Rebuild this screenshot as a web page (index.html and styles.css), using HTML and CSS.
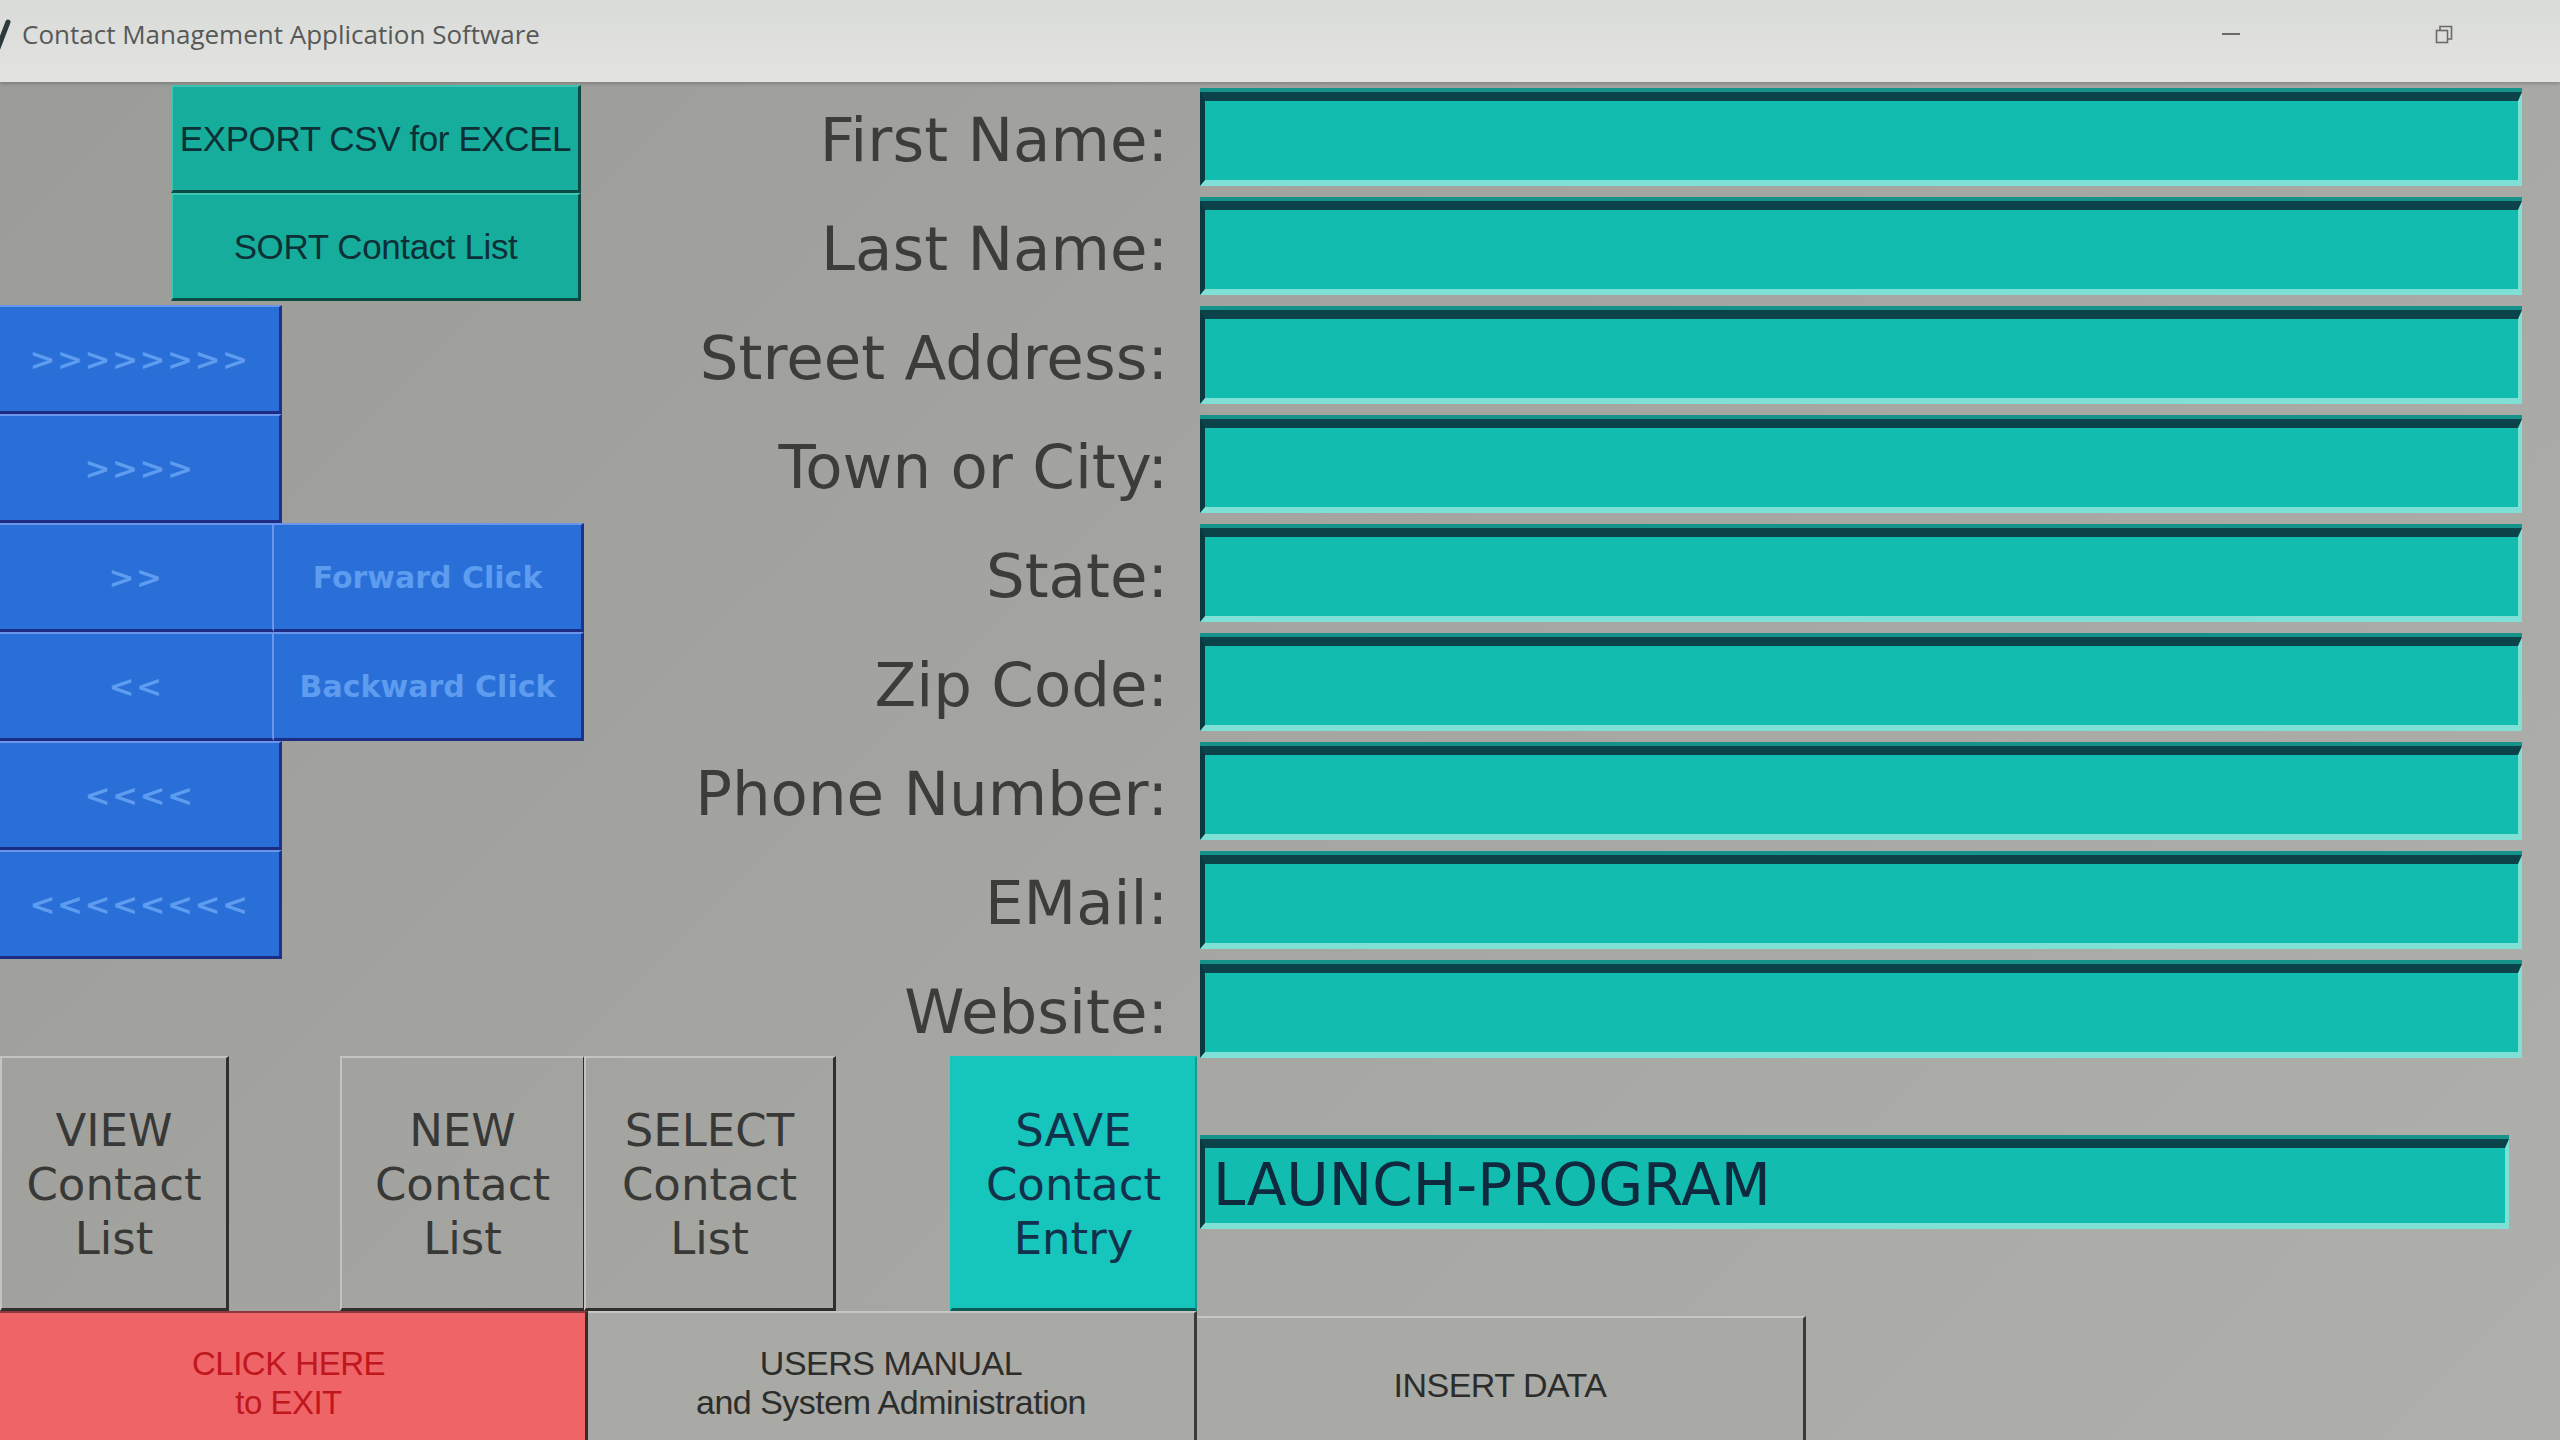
FILE: index.html
```html
<!DOCTYPE html>
<html lang="en">
<head>
<meta charset="utf-8">
<title>Contact Management Application Software</title>
<link rel="stylesheet" href="styles.css">
</head>
<body>
<div class="titlebar">
  <svg class="app-icon" width="16" height="40" viewBox="0 0 16 40"><path d="M2 34 L12 8" stroke="#2c3a3c" stroke-width="5" stroke-linecap="round"/></svg>
  <div class="title">Contact Management Application Software</div>
  <div class="controls">
    <div class="ctl"><svg width="18" height="4" viewBox="0 0 18 4"><rect x="0" y="1" width="18" height="2" fill="#6a6b69"/></svg></div>
    <div class="ctl"><svg width="18" height="20" viewBox="0 0 18 20"><rect x="1.5" y="6.5" width="11" height="12" fill="none" stroke="#6a6b69" stroke-width="1.6"/><path d="M5 6 V2.5 H16.5 V15 H13" fill="none" stroke="#6a6b69" stroke-width="1.6"/></svg></div>
  </div>
</div>

<div class="workspace">
  <div class="top">
    <div class="left">
      <div class="tbtn">EXPORT CSV for EXCEL</div>
      <div class="tbtn">SORT Contact List</div>
      <div class="blue-stack">
        <div class="brow"><div class="bbtn">&gt;&gt;&gt;&gt;&gt;&gt;&gt;&gt;</div></div>
        <div class="brow"><div class="bbtn">&gt;&gt;&gt;&gt;</div></div>
        <div class="brow"><div class="bbtn narrow">&gt;&gt;</div><div class="bbtn click">Forward Click</div></div>
        <div class="brow"><div class="bbtn narrow">&lt;&lt;</div><div class="bbtn click">Backward Click</div></div>
        <div class="brow"><div class="bbtn">&lt;&lt;&lt;&lt;</div></div>
        <div class="brow"><div class="bbtn">&lt;&lt;&lt;&lt;&lt;&lt;&lt;&lt;</div></div>
      </div>
    </div>
    <div class="form">
      <div class="label">First Name:</div><div class="field"></div>
      <div class="label">Last Name:</div><div class="field"></div>
      <div class="label">Street Address:</div><div class="field"></div>
      <div class="label">Town or City:</div><div class="field"></div>
      <div class="label">State:</div><div class="field"></div>
      <div class="label">Zip Code:</div><div class="field"></div>
      <div class="label">Phone Number:</div><div class="field"></div>
      <div class="label">EMail:</div><div class="field"></div>
      <div class="label">Website:</div><div class="field"></div>
    </div>
  </div>

  <div class="bottom">
    <div class="gbtn view">VIEW<br>Contact<br>List</div>
    <div class="spacer-a"></div>
    <div class="gbtn new">NEW<br>Contact<br>List</div>
    <div class="gbtn select">SELECT<br>Contact<br>List</div>
    <div class="spacer-b"></div>
    <div class="gbtn save">SAVE<br>Contact<br>Entry</div>
    <div class="launch-area">
      <div class="field launch">LAUNCH-PROGRAM</div>
    </div>
  </div>

  <div class="footer">
    <div class="fbtn exit">CLICK HERE<br>to EXIT</div>
    <div class="fbtn manual">USERS MANUAL<br>and System Administration</div>
    <div class="fbtn insert">INSERT DATA</div>
  </div>
</div>
</body>
</html>
```

FILE: styles.css
```css
html, body {
  margin: 0;
  padding: 0;
}
body {
  width: 2560px;
  height: 1440px;
  overflow: hidden;
  background: linear-gradient(135deg, #9b9c98 0%, #a5a6a1 50%, #afb0ab 100%);
  font-family: "DejaVu Sans", Verdana, sans-serif;
}

/* ---------- title bar ---------- */
.titlebar {
  height: 82px;
  display: flex;
  align-items: center;
  background: linear-gradient(#d9dbd8, #e3e4e1);
  box-shadow: 0 2px 3px rgba(0, 0, 0, 0.18);
  position: relative;
  z-index: 2;
}
.app-icon {
  margin-left: -4px;
  margin-bottom: 14px;
  flex: none;
}
.title {
  margin-left: 10px;
  margin-bottom: 14px;
  font-family: "Open Sans", "Noto Sans", sans-serif;
  font-size: 26px;
  color: #575957;
}
.controls {
  margin-left: auto;
  margin-right: 10px;
  display: flex;
  margin-bottom: 14px;
}
.ctl {
  width: 213px;
  display: flex;
  justify-content: center;
  align-items: center;
  height: 30px;
}

/* ---------- top area ---------- */
.workspace {
  display: flex;
  flex-direction: column;
}
.top {
  display: flex;
  height: 974px;
}
.left {
  width: 590px;
  flex: none;
  display: flex;
  flex-direction: column;
  padding-top: 3px;
}
.tbtn {
  margin-left: 171px;
  width: 410px;
  height: 108px;
  box-sizing: border-box;
  background: #17ad9c;
  border-top: 2px solid #3cc7b4;
  border-left: 2px solid #3cc7b4;
  border-right: 3px solid #0d4a44;
  border-bottom: 3px solid #0d4a44;
  display: flex;
  align-items: center;
  justify-content: center;
  font-family: "Liberation Sans", Arial, sans-serif;
  font-size: 35px;
  letter-spacing: -0.4px;
  color: #0c3036;
}
.blue-stack {
  margin-top: 4px;
  display: flex;
  flex-direction: column;
}
.brow {
  display: flex;
  height: 109px;
}
.bbtn {
  width: 282px;
  box-sizing: border-box;
  background: #2a6fd8;
  border-top: 2px solid #6b95ea;
  border-bottom: 3px solid #1a2c84;
  border-right: 3px solid #1d3290;
  display: flex;
  align-items: center;
  justify-content: center;
  font-family: "DejaVu Sans", sans-serif;
  font-weight: bold;
  font-size: 31px;
  letter-spacing: 1.5px;
  color: #5d9cee;
}
.bbtn.narrow {
  width: 274px;
  border-right: 2px solid #6b95ea;
}
.bbtn.click {
  width: 310px;
  letter-spacing: 0;
  font-size: 30px;
}

.form {
  flex: 1;
  display: grid;
  grid-template-columns: 1fr 1322px;
  grid-auto-rows: 94px;
  column-gap: 32px;
  row-gap: 15px;
  align-items: center;
  padding: 10px 38px 0 0;
}
.label {
  text-align: right;
  font-size: 61px;
  color: #3c3d3b;
  white-space: nowrap;
}
.field {
  height: 94px;
  box-sizing: border-box;
  background: #12bcaf;
  border-top: 9px solid #0c424a;
  border-left: 5px solid #0a3940;
  border-bottom: 6px solid #7fe0d6;
  border-right: 4px solid #7fe0d6;
  box-shadow: 0 -4px 0 #15938a;
}

/* ---------- bottom row ---------- */
.bottom {
  display: flex;
  height: 255px;
}
.gbtn {
  box-sizing: border-box;
  border-top: 2px solid #c3c4c0;
  border-left: 2px solid #c3c4c0;
  border-right: 3px solid #2f302e;
  border-bottom: 3px solid #2f302e;
  display: flex;
  align-items: center;
  justify-content: center;
  text-align: center;
  padding-top: 4px;
  font-size: 45px;
  line-height: 54px;
  color: #383937;
}
.view { width: 229px; }
.spacer-a { width: 111px; }
.new { width: 244px; border-right-width: 1px; }
.select { width: 252px; }
.spacer-b { width: 114px; }
.save {
  width: 247px;
  background: #16c6bc;
  color: #12314a;
  border-top-color: #16c6bc;
  border-left-color: #16c6bc;
  border-right: 2px solid #109a92;
  border-bottom: 3px solid #0c5a56;
}
.launch-area {
  flex: 1;
  display: flex;
  align-items: center;
}
.field.launch {
  margin-left: 3px;
  width: 1309px;
  height: 90px;
  display: flex;
  align-items: center;
  padding-left: 8px;
  font-size: 58px;
  color: #0f2a3e;
}

/* ---------- footer ---------- */
.footer {
  display: flex;
  height: 129px;
}
.fbtn {
  box-sizing: border-box;
  display: flex;
  align-items: center;
  justify-content: center;
  text-align: center;
  padding-top: 12px;
  font-family: "Liberation Sans", Arial, sans-serif;
  font-size: 34px;
  line-height: 39px;
  letter-spacing: -0.5px;
}
.exit {
  width: 588px;
  background: #ef6466;
  color: #c0161e;
  border-top: 2px solid #8a3a3a;
  border-right: 3px solid #3a2a2a;
  font-size: 33px;
  padding-right: 8px;
}
.manual {
  width: 609px;
  background: #a9aaa6;
  color: #2c2d2b;
  border-top: 2px solid #c6c7c3;
  border-right: 3px solid #3a3b39;
}
.insert {
  width: 609px;
  margin-top: 5px;
  background: #a9aaa6;
  color: #2c2d2b;
  border-top: 2px solid #c6c7c3;
  border-right: 3px solid #3a3b39;
}
```
